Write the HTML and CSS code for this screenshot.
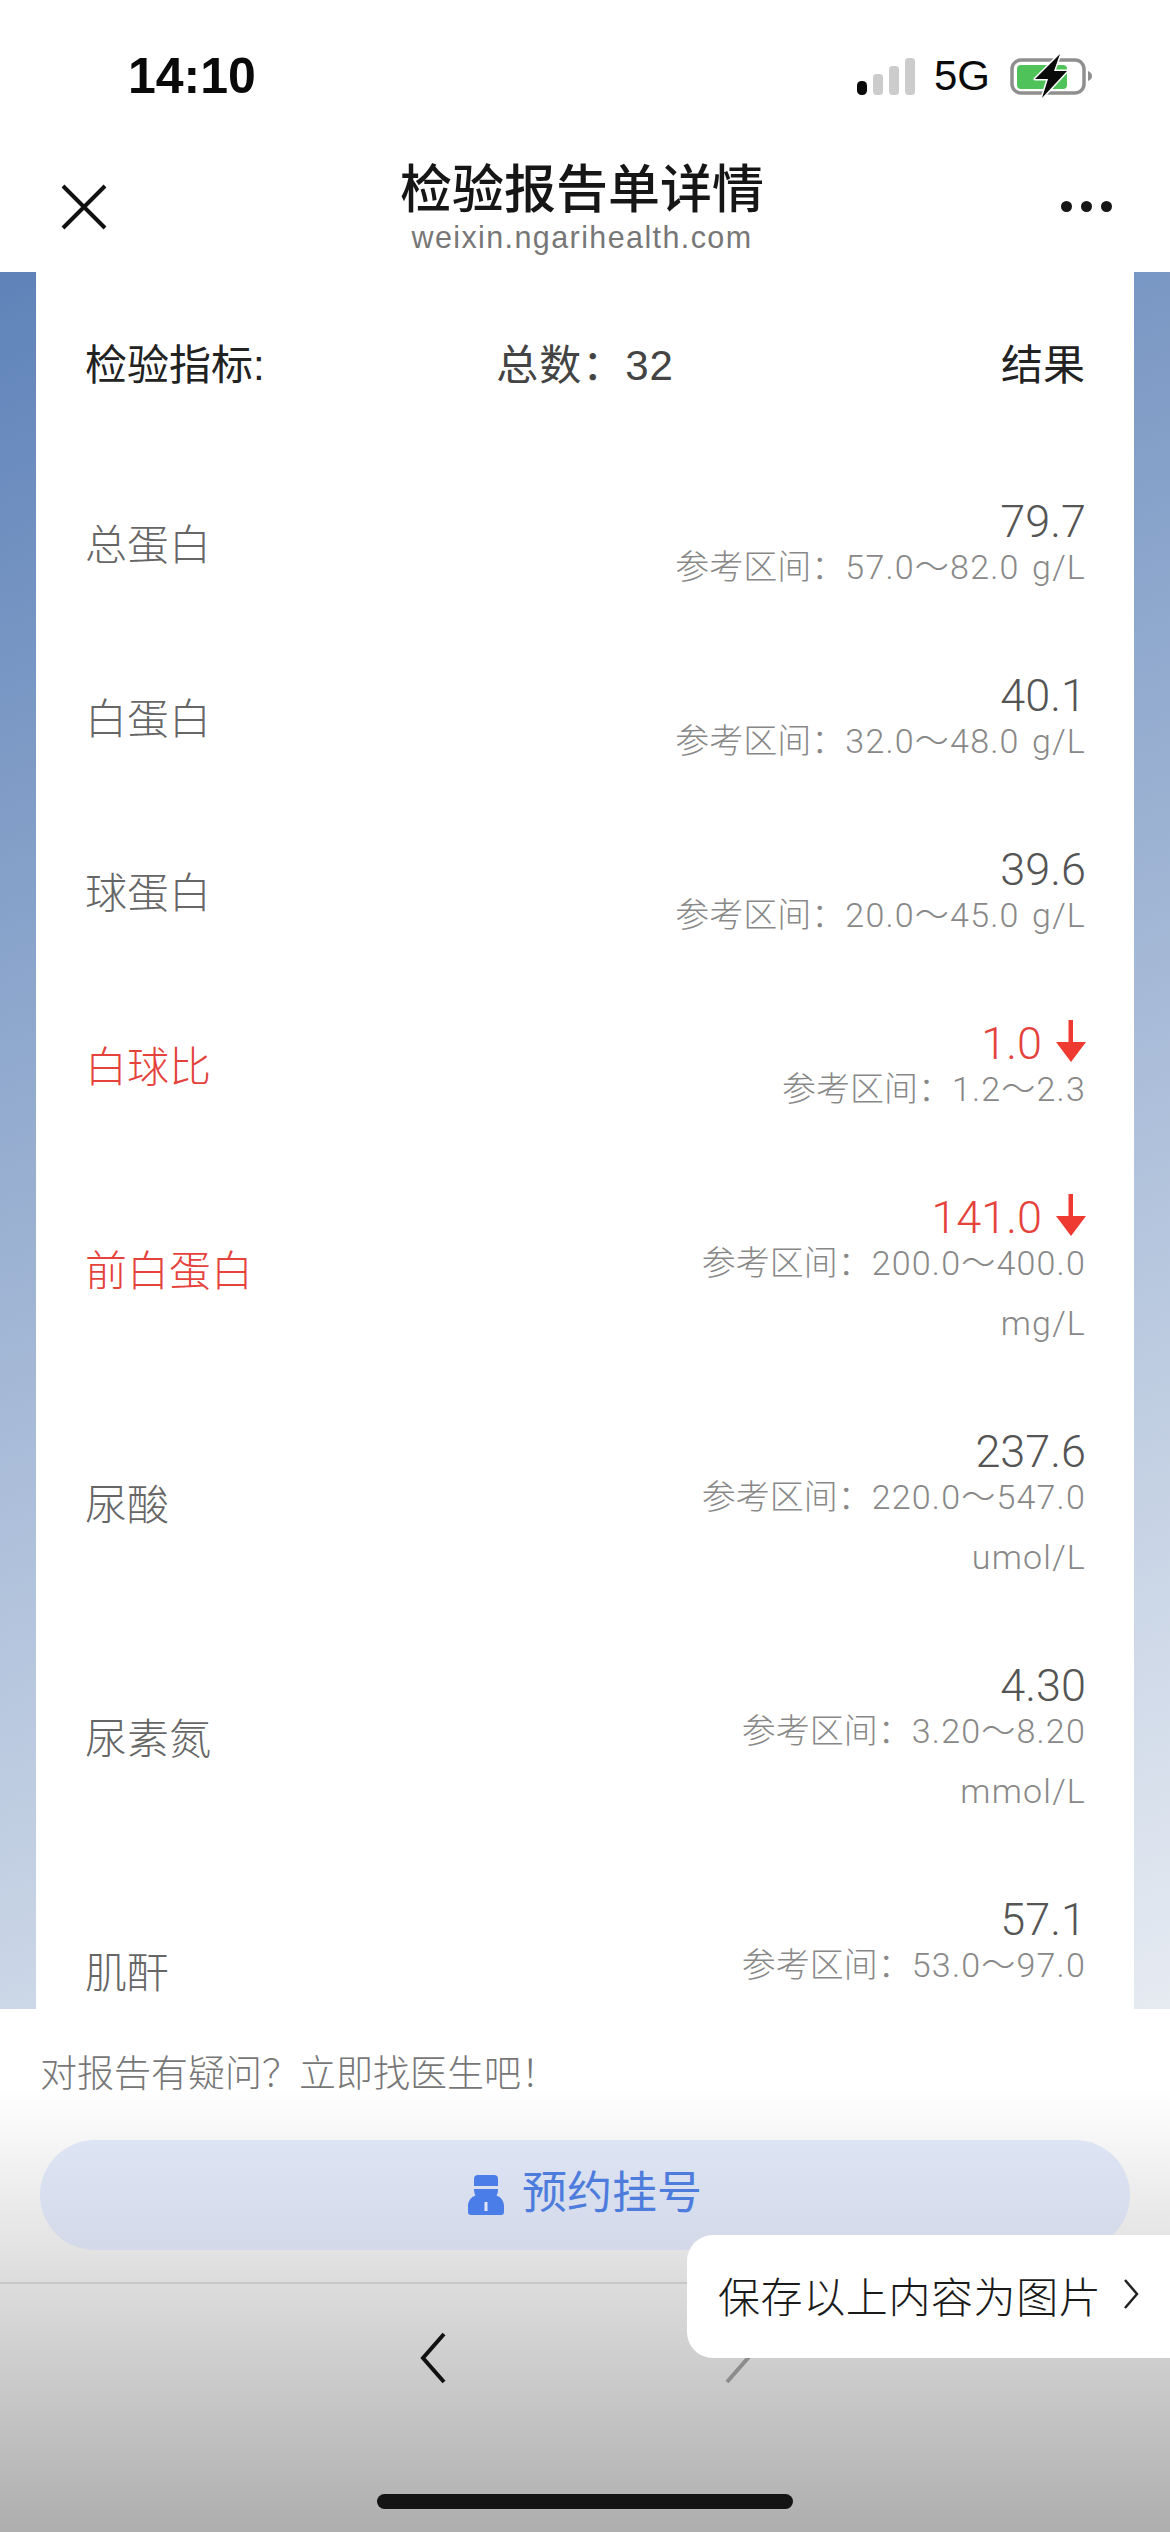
FILE: index.html
```html
<!DOCTYPE html>
<html lang="zh-CN">
<head>
    <meta charset="UTF-8">
    <meta name="viewport" content="width=device-width, initial-scale=1.0">
    <title>检验报告单详情</title>
    <link rel="stylesheet" href="styles.css">
</head>
<body>
    <div class="phone">
        <div class="status-bar">
            <div class="time">14:10</div>
            <div class="status-icons">
                <svg class="signal" width="60" height="38" viewBox="0 0 60 38">
                    <rect x="0" y="24" width="10" height="14" rx="4.5" fill="#0a0a0a"/>
                    <rect x="16" y="17" width="10" height="21" rx="3.5" fill="#cccccc"/>
                    <rect x="32" y="9" width="10" height="29" rx="3.5" fill="#cccccc"/>
                    <rect x="48" y="1" width="10" height="37" rx="3.5" fill="#cccccc"/>
                </svg>
                <span class="network">5G</span>
                <svg class="battery" width="84" height="44" viewBox="0 0 84 44">
                    <rect x="2" y="6" width="72" height="33" rx="9" fill="none" stroke="#8f8f8f" stroke-width="3.5"/>
                    <path d="M78 17c3 1 4 3 4 5s-1 4-4 5z" fill="#8f8f8f"/>
                    <rect x="7" y="11" width="50" height="24" rx="4" fill="#4fc35a"/>
                    <path d="M50 0L25 25H38L32 44L57 17H44Z" fill="#0a0a0a" stroke="#ffffff" stroke-width="3" paint-order="stroke" stroke-linejoin="round"/>
                </svg>
            </div>
        </div>

        <div class="nav">
            <svg class="nav-close" width="46" height="46" viewBox="0 0 46 46">
                <path d="M2 2L44 44M44 2L2 44" fill="none" stroke="#111111" stroke-width="4"/>
            </svg>
            <div class="nav-title">
                <div class="title">检验报告单详情</div>
                <div class="domain">weixin.ngarihealth.com</div>
            </div>
            <div class="nav-more"><i></i><i></i><i></i></div>
        </div>

        <div class="main">
            <div class="card">
                <div class="card-head">
                    <span>检验指标:</span>
                    <span class="total">总数：32</span>
                    <span class="head-result">结果</span>
                </div>

                <div class="row">
                    <div class="name">总蛋白</div>
                    <div class="result">
                        <div class="value">79.7</div>
                        <div class="range"><span class="range-label">参考区间：</span>57.0～82.0 g/L</div>
                    </div>
                </div>
                <div class="row">
                    <div class="name">白蛋白</div>
                    <div class="result">
                        <div class="value">40.1</div>
                        <div class="range"><span class="range-label">参考区间：</span>32.0～48.0 g/L</div>
                    </div>
                </div>
                <div class="row">
                    <div class="name">球蛋白</div>
                    <div class="result">
                        <div class="value">39.6</div>
                        <div class="range"><span class="range-label">参考区间：</span>20.0～45.0 g/L</div>
                    </div>
                </div>
                <div class="row low">
                    <div class="name">白球比</div>
                    <div class="result">
                        <div class="value">1.0
                            <svg class="arrow" width="30" height="42" viewBox="0 0 30 42"><path d="M12.5 0H17V22H30L15 42L0 22H12.5Z" fill="#ef3a32"/></svg>
                        </div>
                        <div class="range"><span class="range-label">参考区间：</span>1.2～2.3</div>
                    </div>
                </div>
                <div class="row low">
                    <div class="name">前白蛋白</div>
                    <div class="result">
                        <div class="value">141.0
                            <svg class="arrow" width="30" height="42" viewBox="0 0 30 42"><path d="M12.5 0H17V22H30L15 42L0 22H12.5Z" fill="#ef3a32"/></svg>
                        </div>
                        <div class="range"><span class="range-label">参考区间：</span>200.0～400.0<br>mg/L</div>
                    </div>
                </div>
                <div class="row">
                    <div class="name">尿酸</div>
                    <div class="result">
                        <div class="value">237.6</div>
                        <div class="range"><span class="range-label">参考区间：</span>220.0～547.0<br>umol/L</div>
                    </div>
                </div>
                <div class="row">
                    <div class="name">尿素氮</div>
                    <div class="result">
                        <div class="value">4.30</div>
                        <div class="range"><span class="range-label">参考区间：</span>3.20～8.20<br>mmol/L</div>
                    </div>
                </div>
                <div class="row">
                    <div class="name">肌酐</div>
                    <div class="result">
                        <div class="value">57.1</div>
                        <div class="range"><span class="range-label">参考区间：</span>53.0～97.0<br>umol/L</div>
                    </div>
                </div>
            </div>
        </div>

        <div class="footer">
            <div class="hint">对报告有疑问？立即找医生吧！</div>
            <div class="book-btn">
                <svg class="doctor" width="36" height="40" viewBox="0 0 36 40">
                    <path d="M6 4a4 4 0 0 1 4-4h16a4 4 0 0 1 4 4v7H6z" fill="#4a7de8"/>
                    <path d="M6 14h24c0 3-.5 5-1.500 6.500C33 22 36 26 36 31v6a3 3 0 0 1-3 3H3a3 3 0 0 1-3-3v-6c0-5 3-9 7.500-10.500C6.500 19 6 17 6 14z" fill="#4a7de8"/>
                    <rect x="16.500" y="27" width="3" height="9" fill="#dfe5f3"/>
                </svg>
                <span>预约挂号</span>
            </div>
            <div class="toolbar">
                <div class="toolbar-btns">
                    <svg width="28" height="52" viewBox="0 0 28 52"><path d="M25 2L4 26L25 50" fill="none" stroke="#111111" stroke-width="4"/></svg>
                    <svg width="28" height="52" viewBox="0 0 28 52"><path d="M3 2L24 26L3 50" fill="none" stroke="#8c8c8c" stroke-width="4" transform="matrix(1 0 0 -1 0 52)"/></svg>
                </div>
                <div class="home-bar"></div>
            </div>
        </div>

        <div class="save-tip">
            <span>保存以上内容为图片</span>
            <svg width="16" height="32" viewBox="0 0 16 32"><path d="M2 2L14 16L2 30" fill="none" stroke="#222222" stroke-width="2.5"/></svg>
        </div>
    </div>
</body>
</html>
```

FILE: styles.css
```css
* {
    box-sizing: border-box;
}

body {
    margin: 0;
    font-family: "Liberation Sans", "Noto Sans CJK SC", sans-serif;
    color: #111111;
    background-color: #ffffff;
}

.phone {
    position: relative;
    display: flex;
    flex-direction: column;
    width: 1170px;
    height: 2532px;
    overflow: hidden;
}

.status-bar {
    display: flex;
    justify-content: space-between;
    align-items: center;
    height: 152px;
    padding: 0 76px 0 128px;
    background-color: #ffffff;
}

.time {
    font-size: 50px;
    font-weight: 700;
    color: #0a0a0a;
}

.status-icons {
    display: flex;
    align-items: center;
    gap: 20px;
}

.signal {
    margin-right: -3px;
}

.network {
    font-size: 42px;
    color: #0a0a0a;
}

.nav {
    display: flex;
    justify-content: space-between;
    align-items: flex-start;
    height: 120px;
    padding: 0 58px 0 61px;
    background-color: #ffffff;
}

.nav-close {
    margin-top: 32px;
}

.nav-title {
    padding: 6px 4px 0 0;
    text-align: center;
}

.title {
    font-size: 52px;
    font-weight: 500;
    line-height: 64px;
    color: #161616;
}

.domain {
    font-size: 30.500px;
    line-height: 30px;
    letter-spacing: 1.4px;
    color: #777777;
}

.nav-more {
    display: flex;
    gap: 9px;
    margin-top: 49px;
}

.nav-more i {
    width: 11px;
    height: 11px;
    border-radius: 50%;
    background-color: #161616;
}

.main {
    flex: 1;
    min-height: 0;
    padding: 0 36px;
    overflow: hidden;
    background: linear-gradient(160deg, #5f83b9, #e6ebf2);
}

.card {
    padding: 0 49px;
    background-color: #ffffff;
}

.card-head {
    display: grid;
    grid-template-columns: 1fr auto 1fr;
    align-items: center;
    height: 185px;
    padding-bottom: 7px;
    font-size: 42px;
    color: #222222;
}

.total {
    color: #444444;
    letter-spacing: 1px;
}

.head-result {
    text-align: right;
}

.row {
    display: flex;
    justify-content: space-between;
    align-items: center;
    padding: 34.500px 0;
}

.name {
    margin-bottom: 5px;
    font-size: 42px;
    font-weight: 300;
    color: #666666;
}

.result {
    margin-right: -1px;
    text-align: right;
    font-family: Roboto, "Liberation Sans", "Noto Sans CJK SC", sans-serif;
    font-weight: 300;
}

.value {
    display: flex;
    justify-content: flex-end;
    align-items: center;
    gap: 14px;
    height: 45px;
    padding-top: 14px;
    font-size: 45px;
    line-height: 31px;
    color: #555555;
}

.arrow {
    flex-shrink: 0;
    margin-top: -5px;
}

.range {
    font-size: 34px;
    line-height: 60px;
    letter-spacing: 1.2px;
    word-spacing: 3px;
    color: #888888;
}

.range-label {
    letter-spacing: 0;
}

.low .name,
.low .value {
    color: #e5423c;
}

.footer {
    display: flex;
    flex-direction: column;
    height: 523px;
    background: linear-gradient(#ffffff 0%, #ffffff 15%, #dddddd 52%, #c9c9c9 72%, #aeaeae 100%);
}

.hint {
    height: 131px;
    padding: 43px 40px 0;
    font-size: 37px;
    font-weight: 300;
    line-height: 46px;
    color: #777777;
}

.book-btn {
    display: flex;
    justify-content: center;
    align-items: center;
    gap: 18px;
    height: 110px;
    margin: 0 40px;
    border-radius: 55px;
    font-size: 45px;
    line-height: 50px;
    color: #4d7cdc;
    background: linear-gradient(#dde4f4, #d3d9e8);
}

.book-btn span {
    margin-bottom: 2px;
}

.toolbar {
    position: relative;
    flex: 1;
    margin-top: 32px;
    border-top: 2px solid #c6c6c6;
}

.toolbar-btns {
    display: flex;
    justify-content: center;
    gap: 277px;
    padding-top: 48px;
}

.home-bar {
    position: absolute;
    left: 377px;
    bottom: 23px;
    width: 416px;
    height: 15px;
    border-radius: 8px;
    background-color: #141414;
}

.save-tip {
    position: absolute;
    left: 687px;
    right: 0;
    top: 2235px;
    display: flex;
    align-items: center;
    gap: 22px;
    height: 123px;
    padding: 0 0 5px 31px;
    border-radius: 26px 0 0 26px;
    font-size: 42px;
    font-weight: 300;
    letter-spacing: 0.6px;
    color: #1a1a1a;
    background-color: #ffffff;
}
```
